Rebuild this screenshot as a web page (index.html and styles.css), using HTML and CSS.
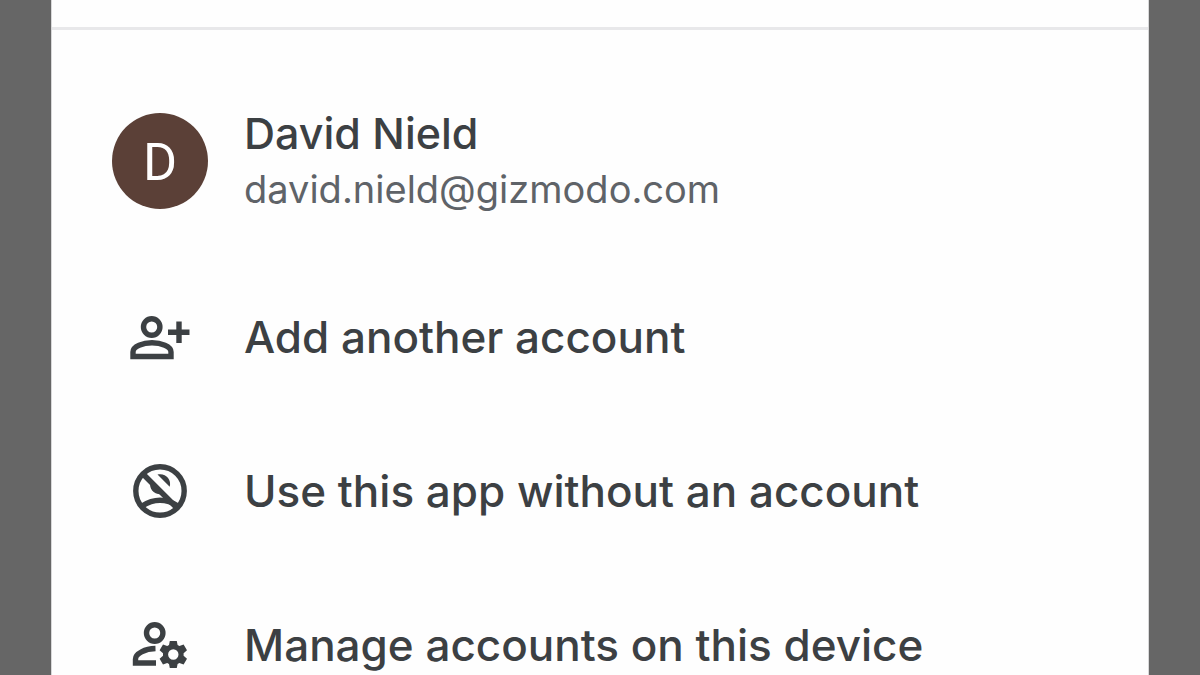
FILE: index.html
```html
<!DOCTYPE html>
<html lang="en">
<head>
  <meta charset="UTF-8">
  <meta name="viewport" content="width=device-width, initial-scale=1.0">
  <title>Accounts</title>
  <link rel="stylesheet" href="styles.css">
</head>
<body>
  <main class="panel">
    <div class="panel-top"></div>

    <button type="button" class="row profile">
      <span class="avatar">D</span>
      <span class="who">
        <span class="name">David Nield</span>
        <span class="email">david.nield@gizmodo.com</span>
      </span>
    </button>

    <button type="button" class="row">
      <span class="icon">
        <svg viewBox="0 0 64 64" aria-hidden="true">
          <circle cx="23.7" cy="22" r="8.2"/>
          <path d="M5 51.5V47C5 41.5 15 37.8 24 37.8S43 41.5 43 47V51.5Z"/>
          <path d="M51 16.5V38M40 27.2H61.5"/>
        </svg>
      </span>
      <span class="label">Add another account</span>
    </button>

    <button type="button" class="row">
      <span class="icon">
        <svg viewBox="0 0 64 64" aria-hidden="true">
          <circle cx="32" cy="32" r="24.2"/>
          <path d="M15 15L49 49"/>
          <path d="M14 47Q32 35.500 50 47"/>
          <path class="solid" d="M29.5 15.5C37 13.5 44 20 41.7 27.8ZM22.5 23C20.500 30 26.500 37 36 35Z"/>
        </svg>
      </span>
      <span class="label">Use this app without an account</span>
    </button>

    <button type="button" class="row">
      <span class="icon">
        <svg viewBox="0 0 64 64" aria-hidden="true">
          <circle cx="26.7" cy="20" r="8.2"/>
          <path d="M28 50H7.5V46C7.5 40.5 17 35.8 27.500 35.500"/>
          <path class="solid" fill-rule="evenodd" d="M41.800 28H48.800L49.600 32L51.400 33L55.600 31.500L59 37.300L55.600 40.200V42.800L59 45.700L55.600 51.500L51.400 50L49.600 51L48.800 55H41.800L41 51L39.200 50L35 51.500L31.600 45.700L35 42.800V40.200L31.600 37.300L35 31.500L39.200 33L41 32ZM45.300 36.300A5.200 5.200 0 1 0 45.300 46.700A5.200 5.200 0 1 0 45.300 36.300Z"/>
        </svg>
      </span>
      <span class="label">Manage accounts on this device</span>
    </button>
  </main>
</body>
</html>
```

FILE: styles.css
```css
* {
  box-sizing: border-box;
}
body {
  margin: 0;
  height: 100vh;
  overflow: hidden;
  background: #666666;
  font-family: Inter, "Liberation Sans", sans-serif;
  color: #3c4043;
}
.panel {
  margin: 0 51px;
  min-height: 100vh;
  background: #fefefe;
  border-left: 1px solid #d8d8d9;
  border-right: 1px solid #d8d8d9;
}
.panel-top {
  height: 30px;
  border-bottom: 3px solid #e8e8ea;
}
.row {
  display: flex;
  align-items: center;
  gap: 36px;
  width: 100%;
  min-height: 154px;
  padding: 0 60px;
  border: none;
  background: none;
  font: inherit;
  color: inherit;
  text-align: left;
  cursor: pointer;
}
.profile {
  margin: 54px 0 22px;
}
.avatar {
  flex: none;
  width: 96px;
  height: 96px;
  border-radius: 50%;
  background: #5b4037;
  color: #ffffff;
  font-family: Roboto, sans-serif;
  font-size: 52px;
  line-height: 100px;
  text-align: center;
}
.who {
  display: flex;
  flex-direction: column;
}
.name,
.label {
  font-size: 44px;
  font-weight: 500;
  line-height: 56px;
}
.name {
  font-size: 43px;
}
.email {
  font-size: 38px;
  line-height: 56px;
  color: #5f6368;
}
.icon {
  flex: none;
  display: flex;
  justify-content: center;
  width: 96px;
}
.icon svg {
  width: 64px;
  height: 64px;
  fill: none;
  stroke: #3c4043;
  stroke-width: 5.4;
}
.icon .solid {
  fill: #3c4043;
  stroke: none;
}
```
